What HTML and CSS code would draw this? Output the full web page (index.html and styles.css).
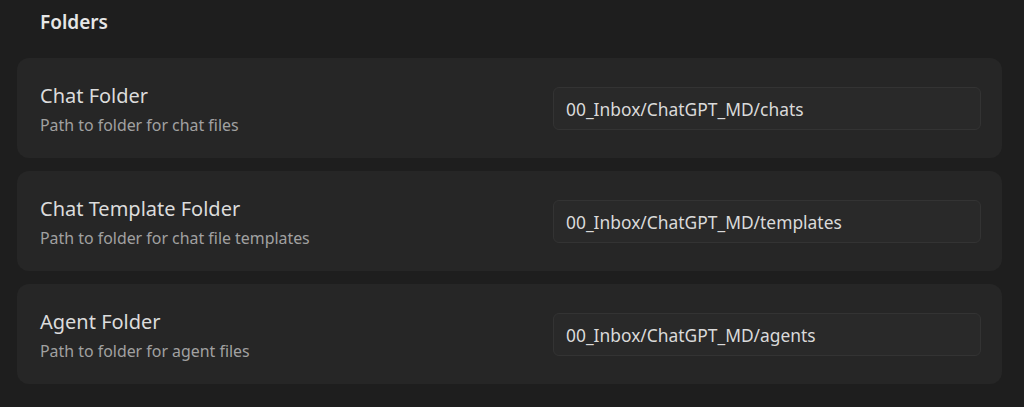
FILE: index.html
```html
<!DOCTYPE html>
<html>
<head>
<meta charset="utf-8">
<link rel="stylesheet" href="styles.css">
</head>
<body>
<div class="page">
  <h2 class="heading">Folders</h2>
  <div class="list">
    <div class="card">
      <div class="info">
        <div class="name">Chat Folder</div>
        <div class="desc">Path to folder for chat files</div>
      </div>
      <input class="field" type="text" value="00_Inbox/ChatGPT_MD/chats">
    </div>
    <div class="card">
      <div class="info">
        <div class="name">Chat Template Folder</div>
        <div class="desc">Path to folder for chat file templates</div>
      </div>
      <input class="field" type="text" value="00_Inbox/ChatGPT_MD/templates">
    </div>
    <div class="card">
      <div class="info">
        <div class="name">Agent Folder</div>
        <div class="desc">Path to folder for agent files</div>
      </div>
      <input class="field" type="text" value="00_Inbox/ChatGPT_MD/agents">
    </div>
  </div>
</div>
</body>
</html>
```

FILE: styles.css
```css
html, body {
  margin: 0;
  padding: 0;
  background: #1e1e1e;
  font-family: "Noto Sans", "Open Sans", sans-serif;
  color: #dadada;
}
.page {
  padding: 8px 22px 0 17px;
}
.heading {
  margin: 0 0 0 23px;
  font-size: 19px;
  font-weight: 600;
  line-height: 28px;
  color: #e6e6e6;
}
.list {
  margin-top: 22px;
  display: flex;
  flex-direction: column;
  gap: 13px;
}
.card {
  height: 100px;
  box-sizing: border-box;
  background: #262626;
  border-radius: 12px;
  display: flex;
  align-items: center;
  justify-content: space-between;
  padding: 0 21px 0 23px;
}
.info {
  display: flex;
  flex-direction: column;
  gap: 5px;
  margin-top: 2px;
}
.name {
  font-size: 20px;
  line-height: 26px;
  color: #dcdcdc;
}
.desc {
  font-size: 15.9px;
  line-height: 22px;
  color: #a1a1a1;
}
.field {
  width: 428px;
  height: 43px;
  box-sizing: border-box;
  background: #292929;
  border: 1px solid #333333;
  border-radius: 6px;
  padding: 2px 12px 0;
  font-family: inherit;
  font-size: 17.4px;
  color: #dadada;
  outline: none;
}
```
